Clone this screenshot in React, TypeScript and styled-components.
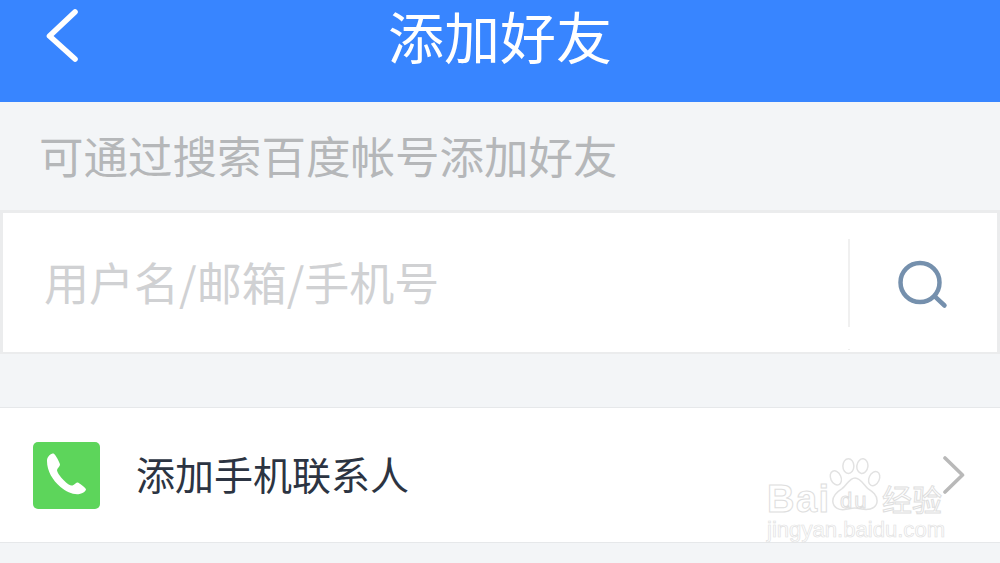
import React from 'react';
import styled, { createGlobalStyle } from 'styled-components';

const GlobalStyle = createGlobalStyle`
  html, body {
    margin: 0;
    padding: 0;
    width: 1000px;
    height: 563px;
    overflow: hidden;
    background: #f3f5f7;
    font-family: "Noto Sans CJK SC", "Liberation Sans", sans-serif;
  }
`;

const App: React.FC = () => {
  return (
    <Page>
      <GlobalStyle />
      <Header>
        <BackButton>
          <svg width="36" height="58" viewBox="0 0 36 58" fill="none">
            <path d="M30 5 L4.5 29 L30 52" stroke="#fff" strokeWidth="5.6" strokeLinecap="round" strokeLinejoin="round" />
          </svg>
        </BackButton>
        <Title>添加好友</Title>
      </Header>
      <Hint>可通过搜索百度帐号添加好友</Hint>
      <SearchBox>
        <Placeholder>用户名/邮箱/手机号</Placeholder>
        <SearchButton>
          <svg width="52" height="52" viewBox="0 0 52 52" fill="none">
            <circle cx="24" cy="24.5" r="19.5" stroke="#7590ad" strokeWidth="4.5" />
            <path d="M39 38.7 L48.5 47.5" stroke="#7590ad" strokeWidth="4.5" strokeLinecap="round" />
          </svg>
        </SearchButton>
      </SearchBox>
      <ContactRow>
        <PhoneIcon>
          <svg width="46" height="46" viewBox="2.5 0 46 46">
            <path
              d="M11 1.5 C8 2.5 5.5 5 5.5 9 C5.5 19 11 28 19 35 C25 40 32 43 38 42 C41.5 41.5 44 39.5 44.5 37.5 C44.5 36 39 32 36.5 30.5 C35 30 33 32.5 31 33.5 C29 34 26 32 22 28 C18 24 15.5 20 15.5 18 C16 16 18.5 14.5 18.5 12.5 C18 10 14 3 12.5 1.8 C12 1.4 11.5 1.4 11 1.5 Z"
              fill="#fff"
            />
          </svg>
        </PhoneIcon>
        <RowLabel>添加手机联系人</RowLabel>
        <Chevron>
          <svg width="22" height="38" viewBox="0 0 22 38" fill="none">
            <path d="M2 2 L19.5 19 L2 36" stroke="#b9b9b9" strokeWidth="3.6" strokeLinecap="round" strokeLinejoin="round" />
          </svg>
        </Chevron>
      </ContactRow>
      <Watermark>
        <WatermarkTop>
          <WatermarkBrand>Bai</WatermarkBrand>
          <PawMark>
            <svg width="54" height="56" viewBox="0 0 72 76" fill="none" stroke="#e2e2e2" strokeWidth="2">
              <ellipse cx="10" cy="27" rx="7" ry="10" transform="rotate(-25 10 27)" />
              <ellipse cx="27" cy="11" rx="7.5" ry="10" />
              <ellipse cx="46" cy="11" rx="7.5" ry="10" transform="rotate(8 46 11)" />
              <ellipse cx="62" cy="28" rx="7" ry="10" transform="rotate(25 62 28)" />
              <path d="M36 27 C28 27 25 37 18 42 C10 47 5 52 6 60 C7 68 15 71 22 70 C28 69 32 68 36 68 C41 68 45 70 51 70 C59 70 66 66 66 58 C66 50 60 46 54 42 C48 37 44 27 36 27 Z" />
            </svg>
            <PawText>du</PawText>
          </PawMark>
          <WatermarkCn>经验</WatermarkCn>
        </WatermarkTop>
        <WatermarkUrl>jingyan.baidu.com</WatermarkUrl>
      </Watermark>
    </Page>
  );
};

export default App;

const Page = styled.div`
  position: relative;
  width: 1000px;
  height: 563px;
  overflow: hidden;
  background: #f3f5f7;
`;

const Header = styled.header`
  position: relative;
  height: 102px;
  display: flex;
  align-items: center;
  justify-content: center;
  background: #3885ff;
`;

const BackButton = styled.div`
  position: absolute;
  left: 45px;
  top: 7px;
  line-height: 0;
`;

const Title = styled.h1`
  margin: 0 0 23px;
  font-family: "Liberation Sans", "Noto Sans CJK SC", sans-serif;
  font-size: 56px;
  line-height: 62px;
  font-weight: 400;
  color: #fff;
`;

const Hint = styled.div`
  height: 108px;
  box-sizing: border-box;
  padding: 25px 0 0 39px;
  font-size: 44.5px;
  line-height: 56px;
  color: #b5b7b9;
`;

const SearchBox = styled.div`
  height: 144px;
  box-sizing: border-box;
  display: flex;
  align-items: center;
  background: #fff;
  border: 3px solid #ebeced;
  border-bottom-width: 2px;
`;

const Placeholder = styled.div`
  flex: 1;
  padding: 0 0 2px 41px;
  font-size: 45px;
  line-height: 60px;
  color: #d0d1d3;
`;

const SearchButton = styled.div`
  position: relative;
  width: 149px;
  height: 88px;
  box-sizing: border-box;
  margin-top: 1px;
  padding: 19px 0 0 46px;
  border-left: 2px solid #f0f0f0;
  line-height: 0;

  &::after {
    content: '';
    position: absolute;
    left: -2px;
    top: 110px;
    width: 2px;
    height: 1px;
    background: #eeeeee;
  }
`;

const ContactRow = styled.div`
  height: 136px;
  box-sizing: border-box;
  margin-top: 53px;
  display: flex;
  align-items: center;
  background: #fff;
  border-top: 1px solid #e6e8ea;
  border-bottom: 1px solid #e6e8ea;
`;

const PhoneIcon = styled.div`
  width: 67px;
  height: 67px;
  margin-left: 33px;
  display: flex;
  align-items: center;
  justify-content: center;
  border-radius: 5px;
  background: #5dd55b;
`;

const RowLabel = styled.div`
  flex: 1;
  margin: 0 0 4px 36px;
  font-size: 39px;
  line-height: 52px;
  color: #2c3442;
`;

const Chevron = styled.div`
  margin-right: 35px;
  line-height: 0;
`;

const Watermark = styled.div`
  position: absolute;
  left: 767px;
  top: 456px;
  width: 190px;
  pointer-events: none;
`;

const WatermarkTop = styled.div`
  display: flex;
  align-items: flex-end;
  height: 58px;
`;

const WatermarkBrand = styled.span`
  flex: none;
  width: 61px;
  font-family: "Liberation Sans", sans-serif;
  font-size: 38px;
  line-height: 30px;
  font-weight: 700;
  letter-spacing: 1.5px;
  color: #fff;
  -webkit-text-stroke: 1px #dedede;
`;

const PawMark = styled.div`
  position: relative;
  flex: none;
  width: 54px;
  height: 56px;
  line-height: 0;
`;

const PawText = styled.span`
  position: absolute;
  left: 12px;
  top: 31px;
  font-family: "Liberation Sans", sans-serif;
  font-size: 22px;
  line-height: 24px;
  letter-spacing: 2px;
  color: #fff;
  -webkit-text-stroke: 1px #dedede;
`;

const WatermarkCn = styled.span`
  margin-bottom: 1px;
  font-size: 30px;
  line-height: 30px;
  white-space: nowrap;
  color: #fff;
  -webkit-text-stroke: 1px #dedede;
`;

const WatermarkUrl = styled.div`
  margin-top: 4px;
  font-family: "Liberation Sans", sans-serif;
  font-size: 22.1px;
  line-height: 24px;
  white-space: nowrap;
  color: #fff;
  -webkit-text-stroke: 0.7px #e2e2e2;
`;
